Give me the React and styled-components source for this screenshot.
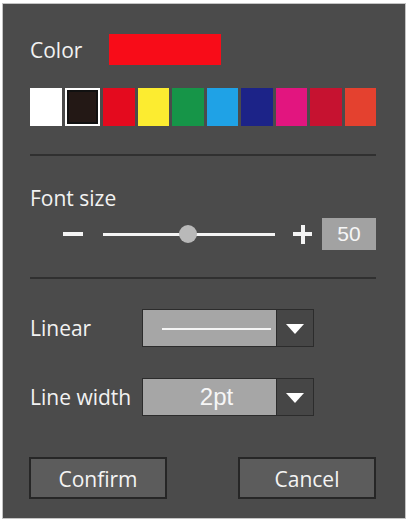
import React from "react";
import styled, { createGlobalStyle } from "styled-components";

const Global = createGlobalStyle`
  html, body { margin: 0; padding: 0; background: #ffffff; }
  body { font-family: "Open Sans", "Noto Sans", sans-serif; }
`;

const Panel = styled.div`
  box-sizing: border-box;
  margin: 3px 0 0 2px;
  width: 404px;
  height: 516px;
  background: #4b4b4b;
  border: 1px solid #c4c4c4;
  padding: 30px 29px 0 27px;
  display: flex;
  flex-direction: column;
  color: #f2f2f2;
`;

const Row = styled.div`
  display: flex;
  align-items: center;
  margin-top: ${(p) => p.$mt || 0}px;
  height: ${(p) => p.$h}px;
  gap: ${(p) => p.$gap || 0}px;
`;

const Label = styled.div`
  font-size: 21px;
  line-height: 28px;
  width: ${(p) => (p.$w ? `${p.$w}px` : "auto")};
  flex: none;
  margin-top: ${(p) => p.$mt || 0}px;
`;

const ColorPreview = styled.div`
  width: 112px;
  height: 31px;
  background: #f80c18;
`;

const Swatches = styled.div`
  display: flex;
  gap: 3px;
  margin-top: 23px;
  height: 38px;
`;

const Swatch = styled.div`
  flex: 1;
  box-sizing: border-box;
  background: ${(p) => p.$c};
  ${(p) =>
    p.$selected &&
    `border: 2px solid #ffffff; box-shadow: inset 0 0 0 2px #111;`}
`;

const Divider = styled.div`
  height: ${(p) => p.$t || 2}px;
  background: #303030;
  margin-top: ${(p) => p.$mt}px;
`;

const Minus = styled.div`
  width: 20px;
  height: 4px;
  background: #f4f4f4;
  margin-left: 33px;
  flex: none;
`;

const Track = styled.div`
  position: relative;
  width: 172px;
  height: 3px;
  background: #f4f4f4;
  flex: none;
`;

const Knob = styled.div`
  position: absolute;
  top: 50%;
  width: 18px;
  height: 18px;
  border-radius: 50%;
  background: #b9b9b9;
  transform: translate(-50%, -50%);
`;

const Plus = styled.div`
  position: relative;
  width: 19px;
  height: 19px;
  flex: none;
  &::before,
  &::after {
    content: "";
    position: absolute;
    background: #f4f4f4;
  }
  &::before {
    left: 0;
    right: 0;
    top: 7.5px;
    height: 4px;
  }
  &::after {
    top: 0;
    bottom: 0;
    left: 7.5px;
    width: 4px;
  }
`;

const ValueBox = styled.div`
  width: 54px;
  height: 32px;
  background: #a2a2a2;
  display: flex;
  align-items: center;
  justify-content: center;
  font-family: "Liberation Sans", Arial, sans-serif;
  font-size: 21px;
  color: #f6f6f6;
  flex: none;
`;

const Select = styled.div`
  box-sizing: border-box;
  width: 172px;
  height: 38px;
  border: 1px solid #2c2c2c;
  display: flex;
  flex: none;
`;

const Field = styled.div`
  flex: 1;
  background: #a6a6a6;
  display: flex;
  align-items: center;
  justify-content: center;
  font-family: "Liberation Sans", Arial, sans-serif;
  font-size: 24px;
  color: #f6f6f6;
  padding-left: ${(p) => p.$pl || 0}px;
`;

const LineSample = styled.div`
  width: 109px;
  height: 2px;
  background: #f4f4f4;
  margin-left: 14px;
  margin-top: 1px;
`;

const Arrow = styled.div`
  width: 37px;
  box-sizing: border-box;
  border-left: 1px solid #2c2c2c;
  background: #464646;
  display: flex;
  align-items: center;
  justify-content: center;
  &::after {
    content: "";
    width: 0;
    height: 0;
    border-left: 9px solid transparent;
    border-right: 9px solid transparent;
    border-top: 10px solid #ffffff;
    margin-top: 2px;
  }
`;

const Buttons = styled.div`
  display: flex;
  justify-content: space-between;
  margin-top: 41px;
  margin-left: -1px;
`;

const Button = styled.button`
  box-sizing: border-box;
  width: 138px;
  height: 42px;
  background: #5c5c5c;
  border: 2px solid #262626;
  color: #f4f4f4;
  font-family: "Open Sans", "Noto Sans", sans-serif;
  font-size: 21px;
  padding: 2px 0 0;
  cursor: pointer;
`;

const colors = [
  "#ffffff",
  "#231815",
  "#e40a1e",
  "#fcec30",
  "#169548",
  "#1fa2e6",
  "#1c2388",
  "#e2157f",
  "#c61230",
  "#e4412f",
];

export default function App() {
  return (
    <>
      <Global />
      <Panel>
        <Row $h={31} $gap={25}>
          <Label $w={54}>Color</Label>
          <ColorPreview />
        </Row>
        <Swatches>
          {colors.map((c, i) => (
            <Swatch key={c} $c={c} $selected={i === 1} />
          ))}
        </Swatches>
        <Divider $mt={28} />
        <Label $mt={28}>Font size</Label>
        <Row $h={32} $mt={6}>
          <Minus />
          <Track style={{ marginLeft: 20 }}>
            <Knob style={{ left: "49.5%" }} />
          </Track>
          <Plus style={{ marginLeft: 18 }} />
          <ValueBox style={{ marginLeft: 10 }}>50</ValueBox>
        </Row>
        <Divider $mt={27} />
        <Row $h={38} $mt={30}>
          <Label $w={112}>Linear</Label>
          <Select>
            <Field>
              <LineSample />
            </Field>
            <Arrow />
          </Select>
        </Row>
        <Row $h={38} $mt={31}>
          <Label $w={112}>Line width</Label>
          <Select>
            <Field $pl={14}>2pt</Field>
            <Arrow />
          </Select>
        </Row>
        <Buttons>
          <Button>Confirm</Button>
          <Button>Cancel</Button>
        </Buttons>
      </Panel>
    </>
  );
}
